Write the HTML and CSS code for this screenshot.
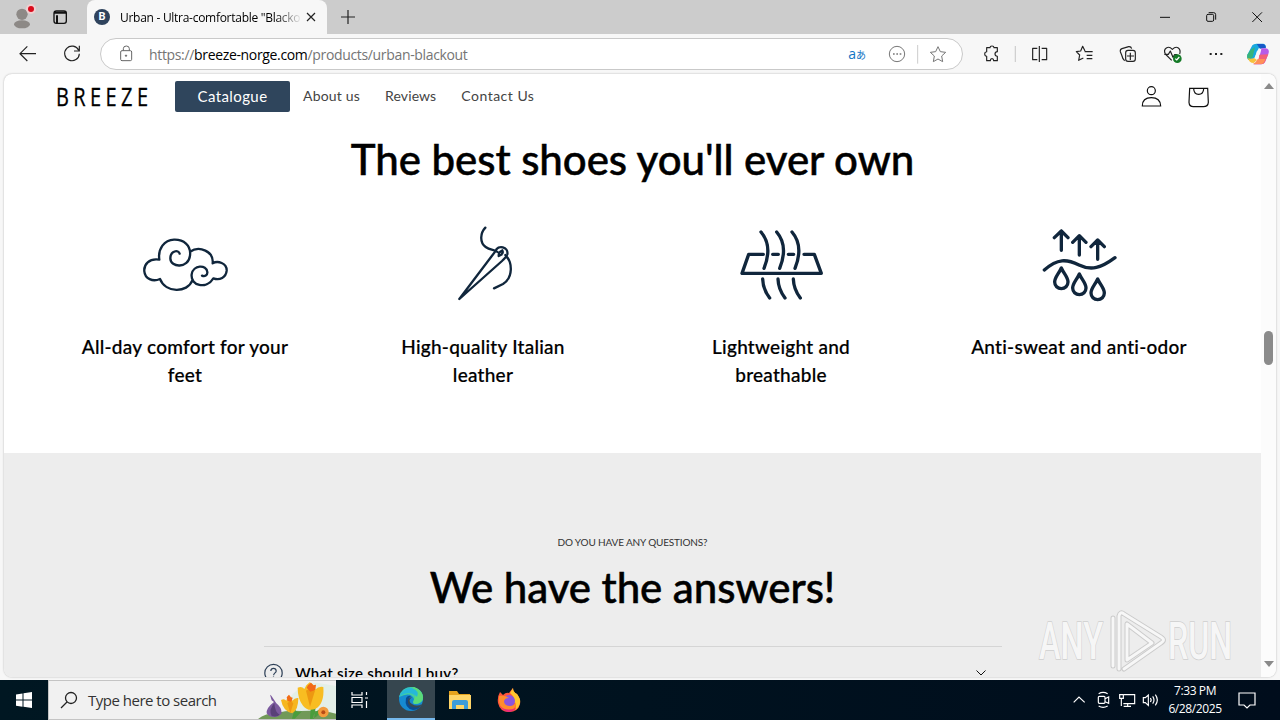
FILE: index.html
```
<!DOCTYPE html>
<html lang="en">
<head>
    <meta charset="UTF-8">
    <meta name="viewport" content="width=device-width, initial-scale=1.0">
    <title>Urban - Ultra-comfortable "Blackout"</title>
    <link rel="stylesheet" href="styles.css">
</head>
<body>

<!-- Browser tabs -->
<div class="tab-strip">
    <svg class="profile" width="87" height="34" viewBox="0 0 261 102">
        <circle cx="66" cy="43" r="17" fill="#8d8986"/>
        <ellipse cx="66" cy="73" rx="24" ry="12" fill="#8d8986"/>
        <circle cx="93" cy="27" r="15" fill="#f0cfd0"/>
        <circle cx="93" cy="27" r="9" fill="#d90b1c"/>
        <rect x="162" y="33" width="37" height="37" rx="7" fill="none" stroke="#111" stroke-width="4"/>
        <path d="M162 38h37M171 46v24" stroke="#111" stroke-width="6"/>
    </svg>
    <div class="tab">
        <span class="favicon">B</span>
        <span class="tab-title">Urban - Ultra-comfortable "Blacko</span>
        <svg width="12" height="12" viewBox="0 0 12 12"><path d="M2 2l8 8M10 2l-8 8" stroke="#222" stroke-width="1.2"/></svg>
    </div>
    <svg class="new-tab" width="16" height="16" viewBox="0 0 16 16"><path d="M8 1v14M1 8h14" stroke="#222" stroke-width="1.2"/></svg>
    <svg class="window-buttons" width="140" height="34" viewBox="930 0 420 102" fill="none" stroke="#111" stroke-width="3">
        <path d="M990 52h30M1267 37l29 29M1296 37l-29 29"/>
        <rect x="1130" y="43" width="21" height="21" rx="4"/>
        <path d="M1136 38h15q6 0 6 6v15"/>
    </svg>
</div>

<!-- Browser toolbar -->
<div class="toolbar">
    <svg class="back" width="40" height="36" viewBox="24 108 120 108" fill="none" stroke="#222" stroke-width="3.5">
        <path d="M108 161H61M82 139l-22 22 22 22"/>
    </svg>
    <svg class="reload" width="40" height="36" viewBox="156 108 120 108" fill="none" stroke="#222" stroke-width="3.5">
        <path d="M236 151a22 22 0 1 0 2 10M238 137v16h-16"/>
    </svg>
    <div class="address-bar">
        <svg width="16" height="20" viewBox="354 132 48 60" fill="none" stroke="#666" stroke-width="3">
            <rect x="362" y="152" width="33" height="30" rx="4"/>
            <path d="M370 152v-6a9 8 0 0 1 18 0v6"/>
            <circle cx="378" cy="167" r="2" fill="#666"/>
        </svg>
        <span class="url">https://<b>breeze-norge.com</b>/products/urban-blackout</span>
        <span class="translate">a<small>あ</small></span>
        <svg width="78" height="30" viewBox="165 117 234 90" fill="none" stroke="#777" stroke-width="3">
            <circle cx="204" cy="162" r="23"/>
            <path d="M192 162h5M202 162h5M212 162h5" stroke-width="4"/>
            <path d="M266 135v56" stroke="#ccc"/>
            <path stroke-linejoin="round" d="M327 140l7 15 16 2-12 11 3 17-14-8-14 8 3-17-12-11 16-2z"/>
        </svg>
    </div>
    <svg class="tools" width="310" height="36" viewBox="417 108 930 108" fill="none" stroke="#222" stroke-width="3.5" stroke-linejoin="round">
        <path d="M470 143h10q0-5 6-5t6 5h10v12q-7 1-7 7t7 7v13h-11q0-6-5-6t-5 6h-11v-13q-6-1-6-7t6-7z"/>
        <path d="M556 138v48" stroke="#ccc"/>
        <path d="M622 145h-14v34h14M635 145h15v34h-15M628 138v48"/>
        <path d="M766 153h-1l-7-14-6 14-13 2 10 10-3 16 14-7M764 155h24M770 166h17M770 176h17"/>
        <path d="M884 182q-6-4-9-17l-4-10q-1-7 5-9l20-6q7-1 9 6"/>
        <rect x="887" y="151" width="29" height="33" rx="7"/>
        <path d="M901 158v22M891 168h21"/>
        <path d="M1025 181l-19-19q-6-12 3-18t18 4q10-10 18-4t4 18M1003 163h12l6-10 8 19 5-8h8"/>
        <circle cx="1042" cy="176" r="13" fill="#147a27" stroke="none"/>
        <path d="M1036 176l4 4 8-9" stroke="#fff"/>
        <path d="M1139 162h6M1155 162h6M1171 162h6" stroke-width="6"/>
        <g stroke="none">
            <path fill="#18a9df" d="M1267 136q4-5 12-5h20q8 1 9 10l-22 4-10 22q-5 13-12 13-14 0-12-16z"/>
            <path fill="#36b47b" d="M1262 149l13-7-7 29-12 9q-7-6-4-16z"/>
            <path fill="#f7c23d" d="M1254 174q6 5 18 0l9 6-10 9q-14 0-17-15z"/>
            <path fill="#1759c7" d="M1280 132h20q7 2 8 12l-18 2z"/>
            <path fill="#b75be8" d="M1294 145h13q12 2 9 14l-10 25q-3 9-13 9h-23q12-4 16-16l6-21q2-8 2-11z"/>
            <path fill="#f36178" d="M1288 164l27-1-9 21q-3 9-13 9h-23q12-4 16-16z"/>
            <path fill="#ff9059" d="M1283 177h23q-4 15-13 15h-24q9-4 14-15z"/>
            <path fill="#f7f7f7" d="M1281 152h8l-5 18h-8z"/>
        </g>
    </svg>
</div>

<!-- Web page -->
<div class="viewport">
    <main class="page">
        <header class="site-header">
            <svg class="logo" width="96" height="30" viewBox="0 0 96 30">
                <text x="0" y="24" textLength="115" transform="scale(.8 1)">BREEZE</text>
            </svg>
            <a class="nav-button">Catalogue</a>
            <a class="nav-about">About us</a>
            <a class="nav-reviews">Reviews</a>
            <a class="nav-contact">Contact Us</a>
            <svg class="account" width="76" height="30" viewBox="924 246 228 90" fill="none" stroke="#111" stroke-width="3.6">
                <circle cx="964" cy="272" r="12"/>
                <path d="M937 318q0-25 27-25t28 25zM1079 265h54l2 42q-1 13-15 13h-30q-12 0-13-13zM1091 266q1 17 15 17t15-17"/>
            </svg>
        </header>

        <section class="benefits">
            <h2>The best shoes you'll ever own</h2>
            <div class="benefit-grid">
                <div class="benefit">
                    <svg width="130" height="90" viewBox="0 0 390 270">
                        <path d="M179 101c-3-13-28-9-28 14 0 29 55 31 59-8 4-32-20-49-48-48-29 1-49 27-44 60-31-5-47 15-45 35 2 22 25 33 47 23 17 43 82 43 97 4M210 95c28-19 72-1 68 35 15-9 43-1 42 22-2 21-21 30-40 23-21 34-69 23-65-12 4-29 45-30 47-7 1 10-8 15-16 11"/>
                    </svg>
                    <h3>All-day comfort for your feet</h3>
                </div>
                <div class="benefit">
                    <svg width="90" height="90" viewBox="-6 15 270 270">
                        <path d="M136 38c-15 16-18 44 1 58 12 9 25 8 35 14M58 252L166 109c8-22 40-13 36 9-2 9-9 13-16 20zM180 111l7-5q4 10-5 14l-6 3 1-10M196 120c22 22 24 67-7 87l-27 13"/>
                    </svg>
                    <h3>High-quality Italian leather</h3>
                </div>
                <div class="benefit">
                    <svg class="heavy" width="110" height="90" viewBox="3 0 330 270">
                        <path d="M108 36q36 42 9 109M155 36q36 42 9 109M201 36q36 42 9 109M115 103H71L51 160h238l-21-57h-31M143 103h17M190 103h16M113 177q1 31 21 57M159 177q1 31 21 57M205 177q1 31 21 57"/>
                    </svg>
                    <h3>Lightweight and breathable</h3>
                </div>
                <div class="benefit">
                    <svg class="heavy" width="100" height="90" viewBox="-3 0 300 270">
                        <path d="M94 91V33M73 53l21-20 20 20M148 105V47M128 67l20-20 20 20M203 118V60M183 80l20-20 20 20M43 150c40-35 67-33 104-15s66 9 108-22M94 144c-8 18-20 28-20 42a20 20 0 0 0 40 0c0-14-12-24-20-42zM148 162c-8 18-20 28-20 42a20 20 0 0 0 40 0c0-14-12-24-20-42zM203 177c-8 18-20 28-20 42a20 20 0 0 0 40 0c0-14-12-24-20-42z"/>
                    </svg>
                    <h3>Anti-sweat and anti-odor</h3>
                </div>
            </div>
        </section>

        <section class="faq">
            <p class="caption">DO YOU HAVE ANY QUESTIONS?</p>
            <h2>We have the answers!</h2>
            <div class="question">
                <svg width="20" height="20" viewBox="0 0 20 20" fill="none" stroke="#2e4057" stroke-width="1.2">
                    <circle cx="9.500" cy="10" r="8.700"/>
                    <path d="M6.800 8q.2-2.600 2.700-2.600T12.200 8c0 1.800-2.600 2-2.600 4.200M9.500 13.500v1.400"/>
                </svg>
                <span>What size should I buy?</span>
                <svg class="caret" width="10" height="6" viewBox="0 0 10 6"><path d="M.5.5L5 5 9.500.5" fill="none" stroke="#111"/></svg>
            </div>
        </section>
    </main>
    <div class="scrollbar">
        <i class="arrow-up"></i>
        <i class="thumb"></i>
        <i class="arrow-down"></i>
    </div>
</div>

<svg class="watermark" width="210" height="72" viewBox="0 0 210 72">
    <g class="mark-text">
        <text x="9" y="54" textLength="64" lengthAdjust="spacingAndGlyphs">ANY</text>
        <text x="138" y="54" textLength="64" lengthAdjust="spacingAndGlyphs">RUN</text>
    </g>
    <path class="mark-edge" d="M83 13v48M89 64V11q1-5 5-2l37 23q5 3 0 6L94 64M97 19v36l25-17z"/>
    <path class="mark-line" d="M83 13v48M89 64V11q1-5 5-2l37 23q5 3 0 6L94 64M97 19v36l25-17z"/>
</svg>

<!-- Windows taskbar -->
<div class="taskbar">
    <svg class="start" width="48" height="40" viewBox="0 0 48 40" fill="#fff">
        <path d="M16 14.400l6.500-1V19.500H16zM23.500 13.200l8.500-1.200v7.500h-8.500zM16 20.500h6.500v6.200l-6.500-1zM23.500 20.500H32V28l-8.500-1.200z"/>
    </svg>
    <div class="search">
        <svg width="18" height="18" viewBox="0 0 18 18" fill="none" stroke="#222" stroke-width="1.3"><circle cx="11" cy="7" r="5.500"/><path d="M7 11l-6 6"/></svg>
        <span>Type here to search</span>
        <svg class="flowers" width="78" height="38" viewBox="24 15 234 114">
            <path fill="#e3efe8" d="M100 129Q110 30 200 20l58 10v99z"/>
            <path fill="#719958" d="M24 129q20-18 60-18 25-9 70-6 60-3 104 8v16z"/>
            <path fill="#4a9d3c" d="M118 95l12 34M126 128l8-30q6 14 22 8l-22 22zM182 95l-2 34h12l5-35zM188 128q3-25 28-30-4 18-28 30z"/>
            <path fill="#7b5a9e" d="M72 78q-24 18-22 34 6 11 22 11t23-11q0-18-16-30l-15-23-4-3 5 17z"/>
            <path fill="#594078" d="M73 82q-18 19-8 38 16 4 24-4-14-6-16-34z"/>
            <path fill="#f6b61f" d="M93 72q10-6 16 2 2-12 8-16 8 4 10 16 8-10 18-8 0 36-18 46-28-6-34-40z"/>
            <path fill="#f8bd21" d="M143 35q12-6 20 4 6-14 16-20 14 6 16 22 12-12 25-8 4 52-25 66-22 8-36-10-16-20-16-54z"/>
            <path fill="#ed9811" d="M112 82l9 30 9-30-9-8zM168 44l12 48 15-48-14-8z"/>
            <path fill="#f26a18" d="M110 64l7-8 5 8 6 1-4 12-11-2zM174 28l9-8 7 8 8-2-2 16-15 5-11-12z"/>
            <circle cx="220" cy="108" r="16" fill="#f39b3d"/>
            <circle cx="220" cy="109" r="6" fill="#b74b16"/>
        </svg>
    </div>
    <svg class="task-view" width="51" height="40" viewBox="0 0 51 40" fill="none" stroke="#fff" stroke-width="1.2">
        <path d="M16 12v3h10v-3M16 28v-3h10v3M30.500 12v3M30.500 21v7"/><path d="M16 17.500h10v5H16zM29 18h3"/>
    </svg>
    <div class="task edge">
        <svg width="26" height="26" viewBox="0 0 26 26">
            <circle cx="13" cy="13" r="12" fill="#168ad1"/>
            <path fill="#42cda2" d="M1 11Q4 1 13 1c8 0 13 6 12 12-1 5-8 6-10 4l1-4Q13 5 1 11z"/>
            <path fill="#5bdb79" d="M16 1q8 3 9 10 0 6-8 7-3-1-1-4 4-7-5-11z"/>
            <path fill="#26b8d9" d="M1 11Q5 1 14 2q8 3 5 9-8-8-18 0z"/>
            <path fill="#0a4b91" d="M8 12q-2 10 7 12 5 0 8-4-10 2-12-4-1-4 2-6-3-1-5 2z"/>
            <path fill="#394951" d="M14 11q-5 4 0 7 5 3 10 0l-2 3q-10 2-12-4-1-5 4-6z"/>
        </svg>
    </div>
    <div class="task">
        <svg width="24" height="22" viewBox="0 0 24 22">
            <path fill="#e6a31d" d="M1 2h8l2 3h11v5H1z"/><path fill="#ffd568" d="M1 6h22v14H1z"/>
            <path fill="#3d9cd9" d="M4 20v-7q0-2 2-2h12q2 0 2 2v7h-4v-4H8v4z"/>
        </svg>
    </div>
    <div class="task">
        <svg width="24" height="26" viewBox="0 0 24 26">
            <path fill="#ff5439" d="M3 5l3 3q3-3 6-2 2-3 4-5 0 4 4 6 4 5 3 10-2 8-11 8T1 16Q0 10 3 5z"/>
            <path fill="#ffc52e" d="M16 1q0 4 4 6 4 5 3 9-1 5-5 7 2-5-1-8 1-5-4-9z"/>
            <circle cx="12" cy="14" r="6" fill="#8a55dd"/>
            <path fill="#ff8c2c" d="M2 9q6-1 10 2-5 0-5 4 1 4 6 4 4 0 6-4 0 8-7 9Q3 24 2 14z"/>
            <path fill="#ed2b79" d="M3 19q6 6 16 2-3 4-8 4-5-1-8-6z"/>
        </svg>
    </div>
    <svg class="tray" width="100" height="40" viewBox="138 240 300 120" fill="none" stroke="#fff" stroke-width="3.500">
        <path d="M161 307l16-16 17 16"/>
        <rect x="235" y="289" width="20" height="21" rx="3"/>
        <path d="M255 296l11-5v19l-11-5M236 281q13-8 27 0M236 318q13 8 27 0"/>
        <path d="M312 284h32v27h-34M323 311v8M311 319h22M299 284h11v11h-11zM304 296v22"/>
        <path d="M370 293h6l9-8v31l-9-8h-6zM391 294q5 6 0 12M398 289q8 11 0 22M406 284q12 16 0 32"/>
    </svg>
    <div class="clock"><span>7:33 PM</span><span>6/28/2025</span></div>
    <svg class="notifications" width="18" height="18" viewBox="0 0 18 18" fill="none" stroke="#fff" stroke-width="1.2"><path d="M1 2h16v12h-5l-3 3-3-3H1z"/></svg>
</div>

</body>
</html>
```
FILE: styles.css
```
/* Reset Styles */
* {
    margin: 0;
    padding: 0;
    box-sizing: border-box;
}

body {
    width: 1280px;
    height: 720px;
    overflow: hidden;
    display: flex;
    flex-direction: column;
    background: #f7f7f7;
    font-family: "Open Sans", sans-serif;
    color: #000;
}

svg {
    display: block;
    flex-shrink: 0;
}

/* Tab strip */
.tab-strip {
    display: flex;
    align-items: center;
    height: 34px;
    background: #ccc;
}

.tab {
    display: flex;
    align-items: center;
    width: 240px;
    height: 34px;
    padding: 0 9px 0 7px;
    background: #f7f7f7;
    border-radius: 8px 8px 0 0;
}

.favicon {
    width: 16px;
    height: 16px;
    border-radius: 50%;
    background: #2f435d;
    color: #fff;
    font: bold 11px/16px Roboto, sans-serif;
    text-align: center;
}

.tab-title {
    width: 180px;
    margin: 0 5px 0 10px;
    overflow: hidden;
    white-space: nowrap;
    font-size: 12px;
    letter-spacing: -0.28px;
    -webkit-mask-image: linear-gradient(to right, #000 155px, transparent 182px);
    mask-image: linear-gradient(to right, #000 155px, transparent 182px);
}

.new-tab {
    margin-left: 13px;
}

.window-buttons {
    margin-left: auto;
}

/* Toolbar */
.toolbar {
    display: flex;
    align-items: center;
    height: 39px;
    padding: 1px 1px 0 8px;
}

.reload {
    margin-left: 4px;
}

.address-bar {
    display: flex;
    align-items: center;
    width: 863px;
    height: 32px;
    margin: 0 6px 0 8px;
    padding: 0 0 0 17px;
    background: #fff;
    border: 1px solid #c9c9c9;
    border-radius: 16px;
}

.url {
    margin-left: 15px;
    font-size: 14px;
    letter-spacing: -0.34px;
    color: #757575;
}

.url b {
    font-weight: normal;
    color: #000;
}

.translate {
    margin-left: auto;
    margin-right: 18px;
    color: #1174c4;
    font: 14px/20px "Open Sans", "Noto Sans CJK JP", sans-serif;
}

.translate small {
    font-size: 10px;
}

/* Page area */
.viewport {
    display: flex;
    width: 1272px;
    height: 603px;
    margin: 1px 4px 3px;
    overflow: hidden;
    background: #fff;
    border-radius: 8px;
    box-shadow: 0 0 2px rgba(0, 0, 0, 0.3);
}

.page {
    width: 1257px;
    overflow: hidden;
    font-family: Lato, sans-serif;
}

.site-header {
    display: flex;
    align-items: center;
    height: 46px;
    padding: 0 47px 1px 52px;
    font-size: 14px;
    line-height: 20px;
    color: #444;
}

.logo {
    margin-top: 1px;
}

.logo text {
    font: 25px "Open Sans", sans-serif;
    fill: #000;
    stroke: #000;
    stroke-width: 0.3px;
}

.nav-button {
    width: 115px;
    height: 31px;
    margin-left: 23px;
    border-radius: 2px;
    background: #2f455c;
    color: #fff;
    font-size: 15px;
    line-height: 30px;
    letter-spacing: 0.4px;
    text-align: center;
}

.nav-about,
.nav-reviews,
.nav-contact {
    margin-bottom: 2px;
}

.nav-about {
    margin-left: 13px;
    letter-spacing: 0.2px;
}

.nav-reviews {
    margin-left: 25px;
    letter-spacing: 0.1px;
}

.nav-contact {
    margin-left: 25px;
    letter-spacing: 0.5px;
}

.account {
    margin-left: auto;
    margin-top: 1px;
}

h2 {
    font-size: 42px;
    font-weight: 500;
    line-height: 48px;
    text-align: center;
    white-space: nowrap;
    letter-spacing: -0.05px;
    -webkit-text-stroke: 0.5px #000;
}

/* Benefits */
.benefits {
    height: 333px;
    padding: 15px 32px 0;
}

.benefit-grid {
    display: grid;
    grid-template-columns: repeat(4, 298px);
    margin-top: 37px;
}

.benefit {
    display: flex;
    flex-direction: column;
    align-items: center;
}

.benefit path {
    fill: none;
    stroke: #10263c;
    stroke-width: 7;
    stroke-linecap: round;
    stroke-linejoin: round;
}

.benefit .heavy path {
    stroke-width: 10;
}

.benefit h3 {
    width: 224px;
    margin-top: 23px;
    font-size: 19px;
    font-weight: 500;
    line-height: 28px;
    letter-spacing: 0.25px;
    text-align: center;
    -webkit-text-stroke: 0.2px #000;
}

/* FAQ */
.faq {
    height: 240px;
    padding: 81px 260px 0;
    background: #ededed;
}

.caption {
    font-size: 10px;
    line-height: 16px;
    letter-spacing: -0.15px;
    text-align: center;
    color: #333;
}

.faq h2 {
    margin-top: 13px;
}

.question {
    display: flex;
    align-items: center;
    width: 738px;
    height: 52px;
    margin-top: 35px;
    border-top: 1px solid #d5d5d5;
    font-size: 15px;
    font-weight: 600;
    letter-spacing: 0.3px;
}

.question span {
    margin-left: 11px;
}

.caret {
    margin-left: auto;
    margin-right: 16px;
}

/* Scrollbar */
.scrollbar {
    display: flex;
    flex-direction: column;
    align-items: center;
    width: 15px;
    padding: 9px 0 10px;
    background: #fcfcfc;
}

.arrow-up,
.arrow-down {
    border: 5px solid transparent;
    border-top-width: 0;
    border-bottom: 6px solid #8a8a8a;
}

.arrow-down {
    margin-top: auto;
    border-top: 6px solid #8a8a8a;
    border-bottom-width: 0;
}

.thumb {
    width: 9px;
    height: 34px;
    margin-top: 242px;
    border-radius: 5px;
    background: #8b8b8b;
}

/* Watermark over the page */
.watermark {
    position: absolute;
    left: 1030px;
    top: 605px;
}

.mark-text {
    font: 500 51px Roboto, sans-serif;
    fill: #f6f6f6;
    stroke: #cfcfcf;
    stroke-width: 1.5px;
    paint-order: stroke;
}

.mark-edge,
.mark-line {
    fill: none;
    stroke: #cbcbcb;
    stroke-width: 5;
    stroke-linecap: round;
    stroke-linejoin: round;
}

.mark-line {
    stroke: #f7f7f7;
    stroke-width: 3;
}

/* Taskbar */
.taskbar {
    display: flex;
    align-items: center;
    height: 40px;
    background: linear-gradient(to right, #001722, #000d1c);
    color: #fff;
}

.search {
    display: flex;
    align-items: center;
    width: 288px;
    height: 40px;
    padding-left: 11px;
    background: #f1f1f1;
    border: 1px solid #c4c4c4;
    border-right: 0;
    color: #333;
    font-size: 15px;
    letter-spacing: -0.5px;
}

.search span {
    margin-left: 10px;
    white-space: nowrap;
}

.flowers {
    margin-left: auto;
}

.task {
    display: flex;
    align-items: center;
    justify-content: center;
    width: 49px;
    height: 40px;
}

.edge {
    width: 48px;
    background: #36464f;
    border-bottom: 2px solid #76b9ed;
}

.tray {
    margin-left: auto;
}

.clock {
    display: flex;
    flex-direction: column;
    align-items: center;
    width: 58px;
    font-size: 12px;
    line-height: 18px;
    letter-spacing: -0.4px;
}

.notifications {
    margin: 0 24px 0 14px;
}
```
